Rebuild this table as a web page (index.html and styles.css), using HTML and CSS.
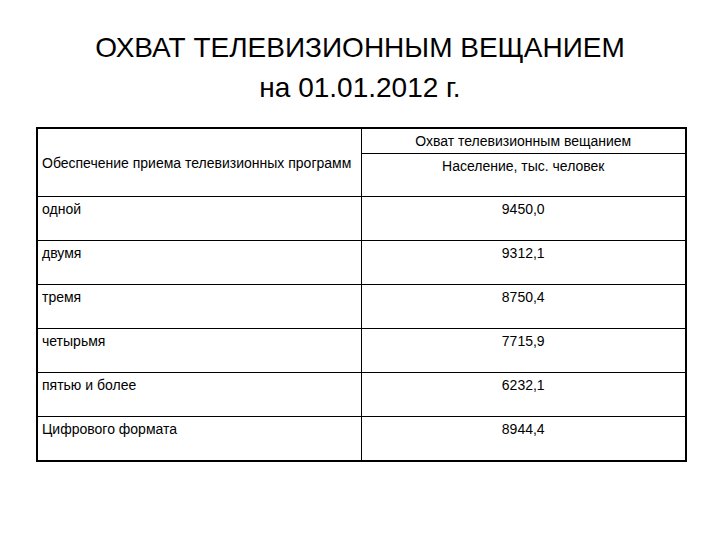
FILE: index.html
```html
<!DOCTYPE html>
<html lang="ru">
<head>
<meta charset="utf-8">
<link rel="stylesheet" href="styles.css">
</head>
<body>
<div class="slide">
  <h1 class="title">ОХВАТ ТЕЛЕВИЗИОННЫМ ВЕЩАНИЕМ<br>на 01.01.2012 г.</h1>
  <table class="data">
    <colgroup><col class="c1"><col class="c2"></colgroup>
    <tr class="h1">
      <td rowspan="2" class="lhead">Обеспечение приема телевизионных программ</td>
      <td class="rhead">Охват телевизионным вещанием</td>
    </tr>
    <tr class="h2">
      <td class="rsub">Население, тыс. человек</td>
    </tr>
    <tr class="row"><td>одной</td><td class="num">9450,0</td></tr>
    <tr class="row"><td>двумя</td><td class="num">9312,1</td></tr>
    <tr class="row"><td>тремя</td><td class="num">8750,4</td></tr>
    <tr class="row"><td>четырьмя</td><td class="num">7715,9</td></tr>
    <tr class="row"><td>пятью и более</td><td class="num">6232,1</td></tr>
    <tr class="row"><td>Цифрового формата</td><td class="num">8944,4</td></tr>
  </table>
</div>
</body>
</html>
```

FILE: styles.css
```css
html, body {
  margin: 0;
  padding: 0;
  background: #fff;
}
body {
  font-family: "Liberation Sans", Arial, sans-serif;
  color: #000;
}
.slide {
  width: 720px;
  height: 540px;
  padding-top: 28px;
  box-sizing: border-box;
}
.title {
  margin: 0;
  font-weight: normal;
  font-size: 28px;
  line-height: 40px;
  text-align: center;
}
.data {
  margin: 19px 0 0 36px;
  width: 649px;
  border-collapse: collapse;
  border: 2px solid #000;
  font-size: 14px;
  line-height: 16px;
  table-layout: fixed;
}
.c1 { width: 324px; }
.c2 { width: 325px; }
.data td {
  border: 1px solid #000;
  padding: 0 4px;
  vertical-align: top;
}
.h1 td.rhead {
  height: 24px;
  text-align: center;
  vertical-align: middle;
}
.lhead {
  vertical-align: middle !important;
}
.h2 td.rsub {
  height: 43px;
  text-align: center;
  padding-top: 4px;
  box-sizing: border-box;
}
.row td {
  height: 44px;
  padding-top: 4px;
  box-sizing: border-box;
}
.row td.num {
  text-align: center;
}
```
